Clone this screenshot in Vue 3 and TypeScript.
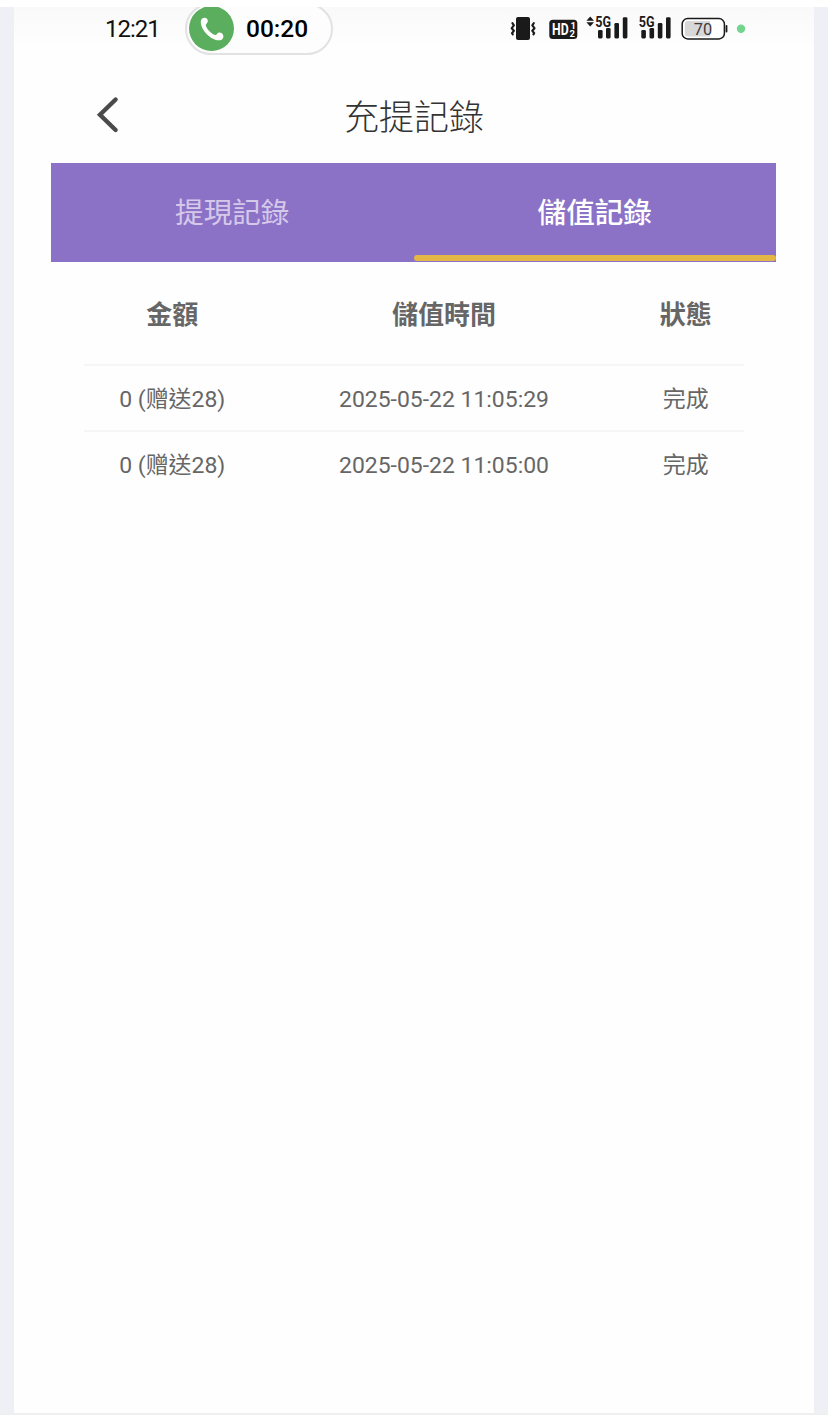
<script setup lang="ts">
import { ref } from 'vue'

interface RechargeRecord {
  amount: string
  time: string
  status: string
}

const tabs: string[] = ['提現記錄', '儲值記錄']
const activeTab = ref<number>(1)

const records: RechargeRecord[] = [
  { amount: '0 (赠送28)', time: '2025-05-22 11:05:29', status: '完成' },
  { amount: '0 (赠送28)', time: '2025-05-22 11:05:00', status: '完成' },
]
</script>

<template>
  <div class="page">
    <div class="phone">
      <header class="status">
        <span class="clock">12:21</span>
        <div class="call">
          <span class="call-icon">
            <svg width="24" height="24" viewBox="0 0 24 24">
              <path d="M0.8 4.2 C1 2 2.8 0.7 4.7 0.8 C6.7 0.9 8.1 2.5 7.8 4.5 C7.6 6.2 5.6 6.9 5.8 8.5 C6.9 12.4 11.6 17 15.2 18 C16.7 18.2 17 15.8 19 15.4 C21.3 15.2 23.2 16.8 23.4 18.9 C23.5 21.3 22 23.1 19.6 23.3 C11.2 23.8 0.3 12.8 0.8 4.2 Z" fill="#fff" />
            </svg>
          </span>
          <span class="call-time">00:20</span>
        </div>
        <svg class="system" width="240" height="42" viewBox="508 7 240 42">
          <g fill="none" stroke="#1a1a1a" stroke-width="2.1" stroke-linejoin="round" stroke-linecap="round">
            <path d="M512.4 23.2 L513.9 25.4 L511.7 28.2 L513.9 30.8 L512 33.2 L512.8 34.4" />
            <path d="M533.8 23.2 L532.3 25.4 L534.5 28.2 L532.3 30.8 L534.2 33.2 L533.4 34.4" />
          </g>
          <rect x="516" y="17" width="14" height="23" rx="2" fill="#1a1a1a" />
          <rect x="549.3" y="19.7" width="28" height="19.3" rx="3.5" fill="#1a1a1a" />
          <text class="hd">
            <tspan x="552" y="35" textLength="16.6" lengthAdjust="spacingAndGlyphs">HD</tspan><tspan x="570.4" y="28.8" class="sub">1</tspan><tspan x="569.4" y="37" class="sub">2</tspan>
          </text>
          <path d="M590.2 16.5 L594 20.7 H586.4 Z M590.2 26.5 L594 22.3 H586.4 Z" fill="#1a1a1a" />
          <text x="595.3" y="27" class="net" textLength="15.8" lengthAdjust="spacingAndGlyphs">5G</text>
          <g fill="#1a1a1a">
            <rect x="598" y="30" width="4.6" height="8.4" rx="1.3" />
            <rect x="606" y="28" width="4.6" height="10.4" rx="1.3" />
            <rect x="614.4" y="23" width="4.6" height="15.4" rx="1.3" />
            <rect x="622.8" y="17.3" width="4.6" height="21.1" rx="1.3" />
          </g>
          <text x="638.8" y="27" class="net" textLength="15.8" lengthAdjust="spacingAndGlyphs">5G</text>
          <g fill="#1a1a1a">
            <rect x="641.3" y="30" width="4.6" height="8.4" rx="1.3" />
            <rect x="649.5" y="28" width="4.6" height="10.4" rx="1.3" />
            <rect x="657.8" y="23" width="4.6" height="15.4" rx="1.3" />
            <rect x="666" y="17.3" width="4.6" height="21.1" rx="1.3" />
          </g>
          <rect x="682.2" y="18.6" width="42.2" height="20.3" rx="5.5" fill="#fff" stroke="#1a1a1a" stroke-width="1.5" />
          <path d="M688 21 H710 V36.4 H688 Q684.8 36.4 684.8 33.4 V24 Q684.8 21 688 21 Z" fill="#d8d8d8" />
          <rect x="725.6" y="25" width="1.8" height="7.5" rx="0.9" fill="#1a1a1a" />
          <text x="693.8" y="35.2" class="battery" textLength="18.4" lengthAdjust="spacingAndGlyphs">70</text>
          <circle cx="741" cy="28.7" r="4.2" fill="#71d58e" />
        </svg>
      </header>

      <nav class="navbar">
        <svg class="back" width="24" height="38" viewBox="0 0 24 38">
          <path d="M20.6 3.5 L5 18.7 L20.6 34" fill="none" stroke="#4a4a4a" stroke-width="4.4" stroke-linecap="round" stroke-linejoin="miter" />
        </svg>
        <h1 class="title">充提記錄</h1>
      </nav>

      <div class="tabs">
        <button
          v-for="(tab, i) in tabs"
          :key="tab"
          class="tab"
          :class="{ active: activeTab === i }"
          @click="activeTab = i"
        >{{ tab }}</button>
      </div>

      <section class="table">
        <div class="row head">
          <span>金額</span>
          <span>儲值時間</span>
          <span>狀態</span>
        </div>
        <div v-for="record in records" :key="record.time" class="row">
          <span>{{ record.amount }}</span>
          <span>{{ record.time }}</span>
          <span>{{ record.status }}</span>
        </div>
      </section>
    </div>
  </div>
</template>

<style>
body {
  margin: 0;
  background: #fff;
}
</style>

<style scoped>
.page {
  box-sizing: border-box;
  width: 828px;
  height: 1408px;
  margin-top: 7px;
  padding: 0 14px;
  background: #eff0f5;
  border-bottom: 2px solid #efeff0;
  font-family: Roboto, "Noto Sans CJK TC", sans-serif;
  display: flow-root;
}
.phone {
  height: 1406px;
  background: #fefefe;
  overflow: hidden;
}
.status {
  display: flex;
  height: 51px;
  background: linear-gradient(#f9f9f9, #fefefe 42px);
}
.clock {
  width: 80px;
  margin-left: 91px;
  font-size: 24px;
  line-height: 44px;
  color: #111;
  letter-spacing: -1px;
}
.call {
  box-sizing: border-box;
  display: flex;
  align-items: center;
  flex: none;
  width: 148px;
  height: 52px;
  margin-top: -4.5px;
  padding-left: 2px;
  border: 2px solid #e2e2e2;
  border-radius: 26px;
  background: #fdfdfd;
}
.call-icon {
  display: flex;
  align-items: center;
  justify-content: center;
  width: 45px;
  height: 45px;
  border-radius: 50%;
  background: #5bae5e;
}
.call-time {
  margin-left: 12px;
  font-size: 24.5px;
  font-weight: 500;
  color: #000;
}
.system {
  flex: none;
  margin-left: 175px;
}
.hd {
  font: 700 16px Roboto, sans-serif;
  fill: #fff;
}
.sub {
  font-size: 9.5px;
}
.net {
  font: 700 15px Roboto, sans-serif;
  fill: #1a1a1a;
}
.battery {
  font: 400 17px Roboto, sans-serif;
  fill: #3c3c3c;
}
.navbar {
  display: grid;
  grid-template-columns: 120px 1fr 120px;
  align-items: center;
  height: 105px;
}
.back {
  margin: 8px 0 0 81px;
}
.title {
  margin: 9px 0 0;
  font-family: "Noto Sans CJK TC", sans-serif;
  font-size: 35px;
  font-weight: 300;
  line-height: 50px;
  text-align: center;
  color: #333;
}
.tabs {
  display: grid;
  grid-template-columns: 1fr 1fr;
  height: 98.5px;
  margin: 0 38px 0 37px;
  background: #8b72c7;
}
.tab {
  display: flex;
  flex-direction: column;
  align-items: center;
  height: 98.5px;
  padding: 27px 0 0;
  border: 0;
  background: none;
  font-family: "Noto Sans CJK TC", sans-serif;
  font-size: 28.6px;
  line-height: 42px;
  color: #d5c9ea;
}
.tab.active {
  font-weight: 500;
  color: #fff;
}
.tab.active::after {
  content: "";
  width: 100%;
  height: 6px;
  margin-top: 23px;
  border-radius: 3px;
  background: #e3b646;
}
.table {
  margin: 0 70px;
}
.row {
  box-sizing: border-box;
  display: grid;
  grid-template-columns: 176.5px 367px 116.5px;
  height: 65.5px;
  border-top: 2px solid #f6f6f6;
  font-size: 22.95px;
  line-height: 67.5px;
  text-align: center;
  color: #666;
}
.row.head {
  height: 102.5px;
  border-top: 0;
  font-family: "Noto Sans CJK TC", sans-serif;
  font-size: 26px;
  font-weight: 700;
  line-height: 102px;
}
</style>
